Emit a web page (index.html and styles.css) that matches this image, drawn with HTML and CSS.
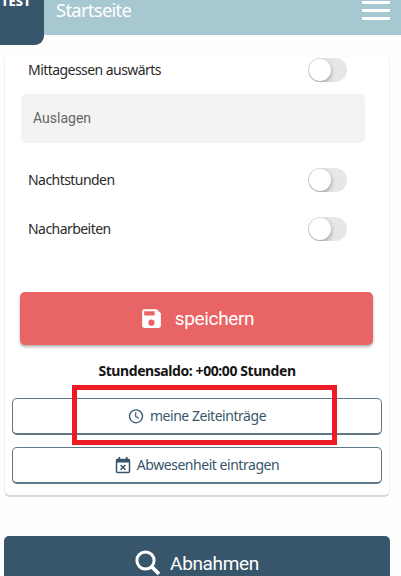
FILE: index.html
```html
<!DOCTYPE html>
<html lang="de">
<head>
    <meta charset="UTF-8">
    <meta name="viewport" content="width=device-width, initial-scale=1.0">
    <title>Startseite</title>
    <link rel="stylesheet" href="styles.css">
</head>
<body>
    <header class="header">
        <div class="logo">TEST</div>
        <h1>Startseite</h1>
        <button class="menu" aria-label="Menü">
            <span></span>
            <span></span>
            <span></span>
        </button>
    </header>

    <main class="page">
        <section class="card">
            <label class="row">
                <span class="label">Mittagessen auswärts</span>
                <span class="toggle"></span>
            </label>
            <div class="field">Auslagen</div>
            <label class="row">
                <span class="label">Nachtstunden</span>
                <span class="toggle"></span>
            </label>
            <label class="row row-last">
                <span class="label">Nacharbeiten</span>
                <span class="toggle"></span>
            </label>

            <button class="save">
                <svg width="25" height="25" viewBox="0 0 24 24"><path fill="#fff" d="M17 3H5a2 2 0 0 0-2 2v14a2 2 0 0 0 2 2h14a2 2 0 0 0 2-2V7l-4-4zm-5 16a3 3 0 1 1 0-6 3 3 0 0 1 0 6zm3-10H5V5h10v4z"/></svg>
                <span>speichern</span>
            </button>

            <p class="saldo">Stundensaldo: +00:00 Stunden</p>

            <div class="entries">
                <button class="outline">
                    <svg width="16" height="16" viewBox="0 0 16 16" fill="none" stroke="#38566b"><circle cx="8" cy="8.3" r="6.5" stroke-width="1.3"/><path stroke-width="1.2" d="M7.7 4.3v4.2l3 2"/></svg>
                    <span>meine Zeiteinträge</span>
                </button>
                <div class="highlight"></div>
            </div>
            <button class="outline absence">
                <svg width="16" height="18" viewBox="0 0 16 18" fill="none" stroke="#38566b"><rect x="1.5" y="3.5" width="13" height="13" rx="1.2" stroke-width="1.5"/><path stroke-width="3.5" d="M1 4.8h14"/><path stroke-width="1.8" d="M4.3 1v3M11.7 1v3"/><path stroke-width="1.6" d="M5.6 9l4.8 4.8M10.4 9l-4.8 4.8"/></svg>
                <span>Abwesenheit eintragen</span>
            </button>
        </section>

        <button class="accept">
            <svg width="26" height="26" viewBox="0 0 26 26" fill="none" stroke="#fff"><circle cx="10.5" cy="10.5" r="8.6" stroke-width="3"/><path stroke-width="3.8" d="M16.5 16.5l7.5 7.5"/></svg>
            <span>Abnahmen</span>
        </button>
    </main>
</body>
</html>
```

FILE: styles.css
```css
* {
    margin: 0;
    padding: 0;
    box-sizing: border-box;
}
body {
    background: #fefefe;
    font-family: "Noto Sans", sans-serif;
    color: #2b2b2b;
    height: 576px;
    overflow: hidden;
}
button {
    font: inherit;
    border: none;
    background: none;
    display: flex;
    align-items: center;
    justify-content: center;
    white-space: nowrap;
}
.header {
    position: relative;
    height: 35px;
    background: #a8c8d1;
    display: flex;
    justify-content: space-between;
    padding: 0 11px 0 56px;
}
.header h1 {
    color: white;
    font-size: 18.5px;
    font-weight: 400;
    line-height: 19px;
    letter-spacing: -0.75px;
}
.logo {
    position: absolute;
    left: 0;
    top: 0;
    width: 44px;
    height: 45px;
    background: #38566b;
    border-radius: 0 0 9px 0;
    color: white;
    font-size: 13px;
    font-weight: 800;
    line-height: 3px;
    padding-left: 1px;
}
.menu {
    flex-direction: column;
    justify-content: flex-start;
    gap: 5px;
    padding-top: 1px;
}
.menu span {
    width: 28px;
    height: 3px;
    background: white;
}
.page {
    padding: 23px 11px 0 4px;
}
.card {
    height: 439px;
    border: 1px solid #eeeff0;
    border-top: none;
    border-bottom: 2px solid #d3d9dc;
    border-radius: 0 0 6px 6px;
    padding: 0 7px;
    background: white;
}
.row {
    display: flex;
    align-items: center;
    justify-content: space-between;
    height: 24px;
    padding: 0 35px 0 16px;
    font-size: 14px;
    letter-spacing: -0.55px;
    white-space: nowrap;
}
.label {
    padding-bottom: 2px;
}
.row-last {
    margin-top: 25px;
}
.toggle {
    width: 39px;
    height: 24px;
    border-radius: 12px;
    background: #e7e7e7;
    padding: 1px;
    overflow: hidden;
}
.toggle::before {
    content: "";
    display: block;
    width: 22px;
    height: 22px;
    border-radius: 50%;
    background: white;
    box-shadow: 0 2px 5px rgba(0, 0, 0, 0.35);
}
.field {
    height: 49px;
    margin: 12px 17px 25px 9px;
    padding-left: 12px;
    border-radius: 5px;
    background: #f3f3f3;
    color: #666;
    font-family: Roboto, sans-serif;
    font-size: 14px;
    line-height: 49px;
}
.save {
    width: 353px;
    height: 53px;
    margin: 51px 0 0 8px;
    border-radius: 5px;
    background: #e96464;
    box-shadow: 0 2px 3px rgba(0, 0, 0, 0.3);
    color: white;
    font-family: Roboto, sans-serif;
    font-size: 19px;
    letter-spacing: -0.35px;
    gap: 11px;
}
.saldo {
    height: 53px;
    line-height: 51px;
    text-align: center;
    font-size: 14px;
    font-weight: 700;
    letter-spacing: -0.42px;
    color: #151515;
}
.entries {
    position: relative;
}
.outline {
    width: 370px;
    height: 37px;
    border: 1px solid #5f7889;
    border-bottom-width: 2px;
    border-radius: 5px;
    color: #38566b;
    font-size: 14px;
    letter-spacing: -0.46px;
    gap: 6px;
    padding-bottom: 1px;
}
.absence {
    margin-top: 12px;
}
/* red frame around the time entries button */
.highlight {
    position: absolute;
    left: 60px;
    top: -13px;
    width: 265px;
    height: 60px;
    border: 5px solid #ed1c24;
}
.accept {
    width: 386px;
    height: 54px;
    margin-top: 39px;
    border-radius: 5px;
    background: #38566b;
    color: white;
    font-family: Roboto, sans-serif;
    font-size: 19px;
    letter-spacing: -0.35px;
    gap: 9px;
}
```
